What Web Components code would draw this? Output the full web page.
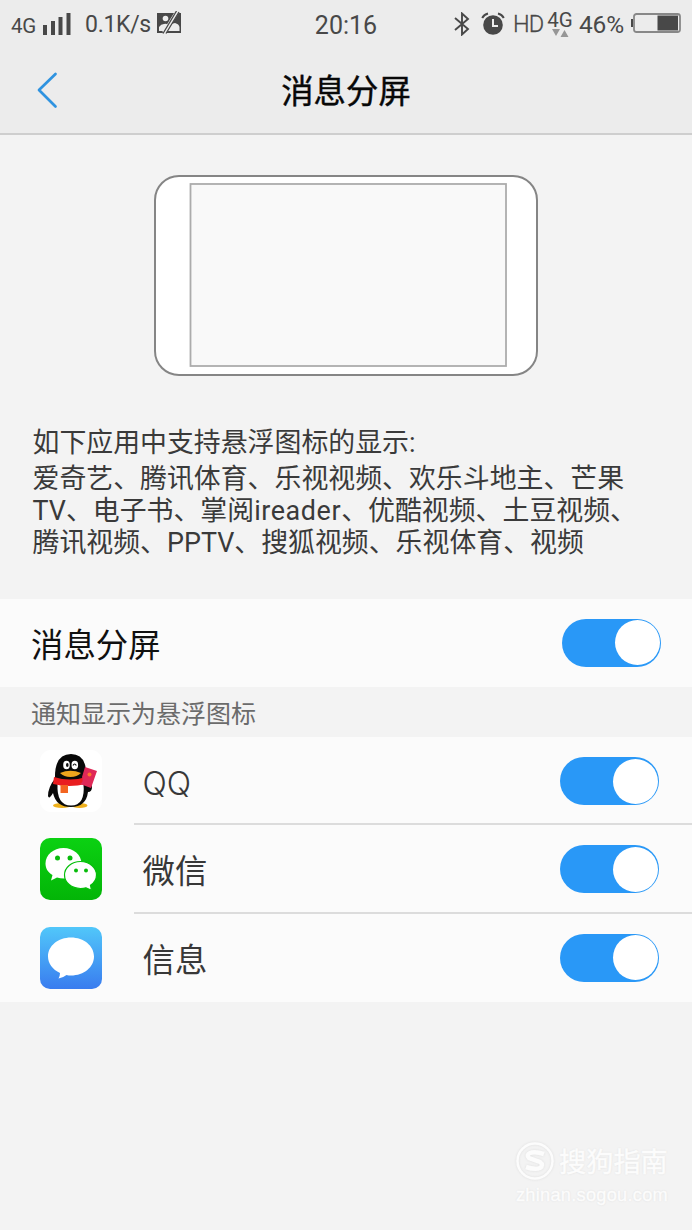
<!DOCTYPE html>
<html lang="zh-CN">
<head>
<meta charset="utf-8">
<title>消息分屏</title>
<style>
body{margin:0;background:#f3f3f3;font-family:Roboto,"Noto Sans CJK SC",sans-serif}
</style>
</head>
<body>
<split-page></split-page>
<script>
const define=(name,html)=>customElements.define(name,class extends HTMLElement{
  constructor(){super();this.attachShadow({mode:'open'}).innerHTML=html;}
});

define('status-bar',`<style>
:host{display:grid;grid-template-columns:1fr auto 1fr;align-items:center;height:48px;padding:0 11px;color:#484848;white-space:nowrap;box-sizing:border-box}
div{display:flex;align-items:center}
svg{display:block;flex:none}
.net{font-size:20.5px;line-height:20px;letter-spacing:-.2px;width:26px;margin-top:4px}
.speed{font-size:23px;line-height:28px;width:69px;margin:1px 0 0 14px;letter-spacing:-.3px}
.time{font-size:25px;line-height:28px;letter-spacing:0;margin-top:3px}
.right{justify-content:flex-end}
.hd{font-size:23.5px;line-height:28px;width:28px;margin-left:8px;font-weight:300;letter-spacing:-1px;-webkit-text-stroke:.3px #484848}
.g{flex-direction:column;width:28px;margin-left:5px;font-size:20.5px;line-height:18px}
.pct{font-size:24.5px;line-height:28px;width:46px;margin-left:5px;letter-spacing:-.2px;margin-top:1px}
</style>
<div><span class="net">4G</span>
<svg style="margin-left:6px" width="28" height="22" fill="#484848"><path d="M0 12h4v10H0zM8 8h4v14H8zM15.500 4h4v18h-4zM23.500 0h4v22h-4z"/></svg>
<span class="speed">0.1K/s</span>
<svg style="margin-left:2px;margin-top:-3px" width="26" height="24" viewBox="0 0 26 24"><path fill="#484848" d="M1 2h24v20H1z"/><circle cx="9.500" cy="7.500" r="2.800" fill="#ececec"/><path fill="#ececec" d="M3 20v-4q2-3 5-3 2-1 4 1l2 1q2-3 5-3 4 1 4.500 4v4z"/><path d="M8 22 21 1" stroke="#ececec" stroke-width="4"/><path d="M7 22.500 20.500 0M10 22.500 23 1" stroke="#484848" stroke-width="1.300"/></svg></div>
<span class="time">20:16</span>
<div class="right">
<svg width="16" height="24" viewBox="0 0 16 24"><path d="m1 6 13 11-6 5.500v-21L14 7 1 18" fill="none" stroke="#484848" stroke-width="1.900"/></svg>
<svg style="margin-left:11px;margin-top:-1px" width="24" height="24" viewBox="0 0 24 24"><circle cx="12" cy="13" r="9.800" fill="#484848"/><path d="M1.200 6Q3 2.500 7 1.500M22.800 6Q21 2.500 17 1.500" fill="none" stroke="#484848" stroke-width="2"/><path d="M12 7v7h5" fill="none" stroke="#ececec" stroke-width="2"/></svg>
<span class="hd">HD</span>
<div class="g"><span>4G</span><svg width="18" height="8" fill="#969696"><path d="M1 0h8L5 7zM9.500 8 13.500 1l4 7z"/></svg></div>
<span class="pct">46%</span>
<svg style="margin:-2px 0 0 6px" width="50" height="20" viewBox="0 0 50 20"><path fill="#484848" d="M0 6h2v8H0z"/><rect x="3" y="1" width="46" height="18" rx="2.500" fill="none" stroke="#888" stroke-width="1.800"/><path fill="#484848" d="M26.500 2.500h20.500v15H26.500z"/></svg>
</div>`);

define('title-bar',`<style>
:host{display:grid;grid-template-columns:96px 1fr 96px;height:87px;box-sizing:border-box;border-bottom:2px solid #cecece;align-items:center}
svg{display:block;margin:-1px 0 0 35px}
h1{margin:3px 0 0;font-size:32.400px;line-height:40px;font-weight:400;-webkit-text-stroke:.4px #080808;color:#080808;text-align:center}
</style><svg width="24" height="38" viewBox="0 0 24 38"><path d="M20.500 3 4 19 20.500 35.500" fill="none" stroke="#2f93e0" stroke-width="2.700" stroke-linecap="round" stroke-linejoin="round"/></svg><h1><slot></slot></h1>`);

define('phone-preview',`<style>
:host{display:block;width:384px;height:201px;margin:40px 0 0 154px}
svg{display:block}
</style><svg width="384" height="201"><rect x="1" y="1" width="382" height="199" rx="24" fill="#fff" stroke="#858585" stroke-width="2"/><rect x="36.500" y="9" width="315.500" height="182" fill="#f9f9f9" stroke="#acacac" stroke-width="1.800"/></svg>`);

define('app-notes',`<style>
:host{display:block;padding:51px 0 0 32.500px;height:171.500px;box-sizing:content-box;color:#3a3a3a;font-size:26.900px;line-height:32px;white-space:nowrap}
::slotted(span){display:block}
::slotted(span:first-child){margin-bottom:4px}
</style><slot></slot>`);

define('latin-word',`<style>:host{display:inline;letter-spacing:.6px}</style><slot></slot>`);

define('toggle-switch',`<style>
:host{display:flex;justify-content:flex-end;align-items:center;width:99px;height:48px;border-radius:24px;background:#2998f7;padding-right:1.500px;box-sizing:border-box;flex:none}
i{width:45px;height:45px;border-radius:50%;background:#fff}
</style><i></i>`);

define('main-setting',`<style>
:host{display:flex;justify-content:space-between;align-items:center;height:88.500px;background:#fbfbfb;padding:0 31px 0 31px;box-sizing:border-box;font-size:32.400px;line-height:40px;color:#101010}
span{margin-top:6px}
</style><span><slot></slot></span><toggle-switch></toggle-switch>`);

define('section-label',`<style>
:host{display:flex;align-items:center;height:50px;padding:5px 0 0 31px;box-sizing:border-box;font-size:25px;line-height:30px;color:#6b6b6b}
</style><slot></slot>`);

define('app-row',`<style>
:host{display:flex;height:88.300px;background:#fbfbfb;padding-left:40px;box-sizing:border-box}
.icon{width:62px;margin:13px 32px 0 0}
.body{flex:1;display:flex;justify-content:space-between;align-items:center;padding:2px 33px 0 8.500px;border-bottom:2px solid var(--rule,#dcdcdc);font-size:32.400px;line-height:40px;color:#383838}
span{margin-top:6px}
</style><div class="icon"><slot name="icon"></slot></div><div class="body"><span><slot></slot></span><toggle-switch></toggle-switch></div>`);

define('icon-qq',`<style>:host,svg{display:block}</style>
<svg width="62" height="62" viewBox="0 0 62 62"><rect width="62" height="62" rx="11" fill="#fff"/>
<ellipse cx="22" cy="55.500" rx="9" ry="2.500" fill="#eeb01c"/><ellipse cx="39.500" cy="55.500" rx="8" ry="2.500" fill="#eeb01c"/>
<path fill="#090909" d="M15.500 28Q8 37 8 46q1 4 5-3Q16 57 31 57t17-15q4 0 4-5-1-7-6-10z"/>
<path fill="#fff" d="M17.500 34h26q2 21.500-12.500 21.500T17.500 34"/>
<path fill="#090909" d="M15 30Q14 4 31 4t15 26z"/>
<ellipse cx="26.500" cy="15" rx="3.300" ry="4.300" fill="#fff"/><ellipse cx="34.800" cy="15" rx="3.300" ry="4.300" fill="#fff"/><ellipse cx="27.300" cy="15" rx="1.300" ry="2" fill="#111"/><path d="M33 15.500q1.600-3 3.300 0" fill="none" stroke="#111" stroke-width="1.200"/>
<path fill="#efa51d" d="M20 23q10.500-4.500 21 0-4 4-10.500 4T20 23"/>
<path fill="#e91d20" d="M14 27q16 5 32 0v7q-17 4-33 0z"/><path fill="#f36521" d="M20.500 35h7.500v8h-7.500z"/>
<path fill="#df2857" d="m45 17 12 4-6 17-11-4q4-2 2-7z"/><circle cx="49.500" cy="24.500" r="2" fill="#ff752f"/></svg>`);

define('icon-wechat',`<style>:host,svg{display:block}</style>
<svg width="62" height="62" viewBox="0 0 62 62"><defs><linearGradient id="g" x2="0" y2="1"><stop stop-color="#0bd112"/><stop offset="1" stop-color="#03b507"/></linearGradient></defs><rect width="62" height="62" rx="10" fill="url(#g)"/>
<path fill="#fff" d="M23.500 10C13.500 10 5.500 17 5.500 25.500c0 5 2.500 9 7 11.500l-1.500 5.500 6-3q3 1 7 1c10 0 17.500-6.500 17.500-15S33.500 10 23.500 10"/>
<path fill="#fff" stroke="#05bf0a" stroke-width="1.200" d="M40.500 23.500c-9 0-16 6-16 13.500s7 13.500 16 13.500q3 0 5.500-.7l5.500 2.500-1-5q6-4 6-10.300c0-7.500-7-13.500-16-13.500"/>
<g fill="#08bb0c"><circle cx="17.500" cy="20" r="2.500"/><circle cx="30" cy="20" r="2.500"/><circle cx="36" cy="32.500" r="2"/><circle cx="46" cy="32.500" r="2"/></g></svg>`);

define('icon-message',`<style>:host,svg{display:block}</style>
<svg width="62" height="62" viewBox="0 0 62 62"><defs><linearGradient id="m" x2="0" y2="1"><stop stop-color="#51c7fa"/><stop offset="1" stop-color="#397cef"/></linearGradient></defs><rect width="62" height="62" rx="10" fill="url(#m)"/>
<path fill="#fff" d="M31 10.500C18 10.500 8 19 8 29.500c0 7 4.500 13 12 16.500q0 3-1.500 5.500 5-1 8-3.500 2 .5 4.500.5c13 0 23-8.500 23-19s-10-19-23-19"/></svg>`);

define('site-mark',`<style>
:host{display:grid;grid-template-columns:40px 110px;column-gap:4px;width:154px;margin:139px 0 0 515px;color:#fcfcfc;text-shadow:0 0 2px #d8d8d8;white-space:nowrap}
svg{display:block;filter:drop-shadow(0 0 1px #ddd)}
b{font-size:27.200px;line-height:40px;font-weight:400;-webkit-text-stroke:.5px #fcfcfc;margin-top:2px}
small{grid-column:1/3;font:18.200px/24px "Liberation Sans",sans-serif;letter-spacing:.27px;-webkit-text-stroke:.4px #fcfcfc;padding-left:1px}
</style><svg width="40" height="40" viewBox="0 0 40 40" fill="none" stroke="#fcfcfc"><circle cx="20" cy="20" r="17.500" stroke-width="2.500"/><path d="M29 13q-9-3-14-1-4 2-1 5l11 4q4 3 0 6-5 2-14-1" stroke-width="4.500"/></svg><b>搜狗指南</b><small>zhinan.sogou.com</small>`);

define('split-page',`<style>
:host{display:block;width:692px;height:1230px;overflow:hidden;background:#f3f3f3}
header{background:#ececec}
app-row:last-of-type{--rule:transparent}
.qq{font-family:Inter,sans-serif;font-size:32px;font-weight:300}
</style>
<header><status-bar></status-bar><title-bar>消息分屏</title-bar></header>
<phone-preview></phone-preview>
<app-notes><span>如下应用中支持悬浮图标的显示:</span><span>爱奇艺、腾讯体育、乐视视频、欢乐斗地主、芒果</span><span>TV、电子书、掌阅<latin-word>ireader</latin-word>、优酷视频、土豆视频、</span><span>腾讯视频、PPTV、搜狐视频、乐视体育、视频</span></app-notes>
<main-setting>消息分屏</main-setting>
<section-label>通知显示为悬浮图标</section-label>
<app-row><icon-qq slot="icon"></icon-qq><span class="qq">QQ</span></app-row>
<app-row><icon-wechat slot="icon"></icon-wechat>微信</app-row>
<app-row><icon-message slot="icon"></icon-message>信息</app-row>
<site-mark></site-mark>`);
</script>
</body>
</html>
